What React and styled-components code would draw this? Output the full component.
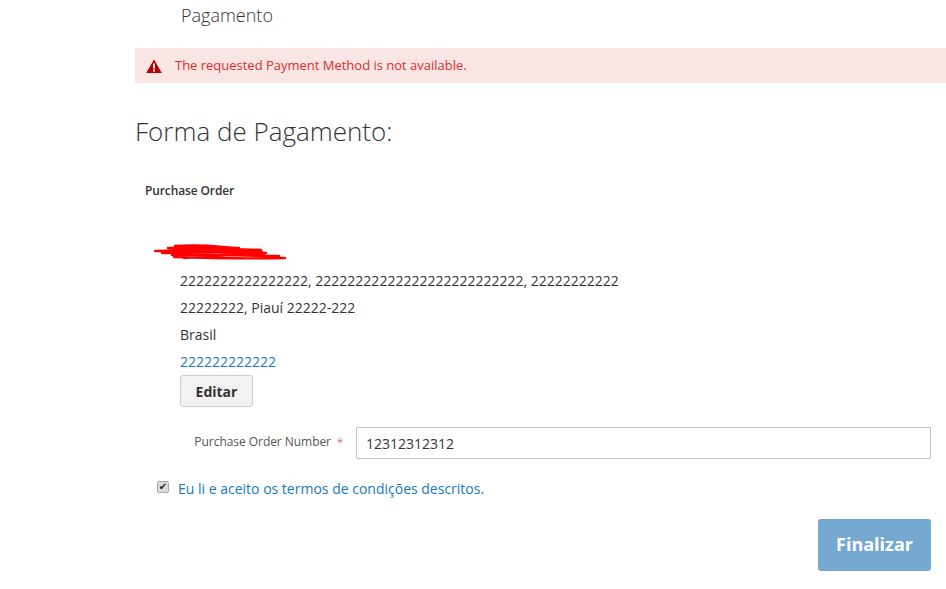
import styled, { createGlobalStyle } from 'styled-components';

const GlobalStyle = createGlobalStyle`
  html, body {
    margin: 0;
    padding: 0;
    background: #fff;
  }

  body {
    font-family: "Open Sans", "Liberation Sans", sans-serif;
    font-size: 14px;
    color: #333;
  }
`;

const Page = styled.div`
  width: 946px;
  height: 589px;
  padding-left: 135px;
  box-sizing: border-box;
  overflow: hidden;
`;

const StepTitle = styled.div`
  height: 48px;
  padding: 3px 0 0 46px;
  box-sizing: border-box;
  font-size: 18px;
  font-weight: 300;
  line-height: 24px;
  color: #333;
`;

const Message = styled.div`
  display: flex;
  align-items: center;
  gap: 12px;
  height: 35px;
  padding-left: 11px;
  background: #fae5e5;
  color: #e02b27;
  font-size: 13px;

  span {
    margin: 0 0 2px 1px;
    letter-spacing: -0.01px;
  }
`;

const Title = styled.h2`
  margin: 30px 0 0;
  font-size: 26px;
  font-weight: 300;
  line-height: 36px;
  color: #333;
`;

const MethodName = styled.div`
  margin: 33px 0 0 10px;
  font-size: 12px;
  font-weight: 600;
  line-height: 18px;
  letter-spacing: -0.12px;
`;

const Scribble = styled.svg`
  display: block;
  margin: 44px 0 0 19px;
`;

const Address = styled.div`
  margin: 6px 0 0 45px;
  line-height: 27px;
`;

const PhoneLink = styled.a`
  display: block;
  color: #1979c3;
  text-decoration: none;
`;

const EditButton = styled.button`
  display: block;
  width: 73px;
  height: 32px;
  padding: 0;
  border: 1px solid #cdcdcd;
  border-radius: 3px;
  background: #f2f2f2;
  color: #333;
  font-family: inherit;
  font-size: 14px;
  font-weight: 700;
`;

const Field = styled.div`
  display: flex;
  align-items: center;
  margin-top: 20px;
  width: 796px;
`;

const FieldLabel = styled.label`
  width: 221px;
  padding-right: 13px;
  box-sizing: border-box;
  text-align: right;
  font-size: 12px;
  letter-spacing: -0.05px;
  color: #555;
  margin-bottom: 4px;

  span {
    margin-left: 6px;
    color: #e4605c;
    font-size: 11px;
  }
`;

const TextInput = styled.input`
  width: 575px;
  height: 32px;
  padding: 0 9px;
  box-sizing: border-box;
  border: 1px solid #c2c2c2;
  border-radius: 1px;
  font-family: inherit;
  font-size: 14px;
  color: #333;
  outline: none;
`;

const Agreement = styled.div`
  display: flex;
  align-items: center;
  gap: 9px;
  margin: 20px 0 0 22px;
  height: 20px;
`;

const CheckBox = styled.input`
  appearance: none;
  display: flex;
  align-items: center;
  justify-content: center;
  width: 12px;
  height: 12px;
  margin: 0 0 4px;
  box-sizing: border-box;
  border: 1px solid #a9a9a9;
  border-radius: 2px;
  background: #dcdcdc;

  &:checked::after {
    content: "✔";
    font-family: "DejaVu Sans", sans-serif;
    font-size: 10px;
    line-height: 10px;
    color: #222;
  }
`;

const AgreementLink = styled.a`
  margin-bottom: 2px;
  color: #1979c3;
  text-decoration: none;
  font-size: 14px;
`;

const Actions = styled.div`
  display: flex;
  justify-content: flex-end;
  width: 796px;
  margin-top: 20px;
`;

const PlaceOrder = styled.button`
  width: 113px;
  height: 52px;
  padding: 0 0 2px;
  border: none;
  border-radius: 3px;
  background: #75a9cf;
  color: #fff;
  font-family: inherit;
  font-size: 18px;
  font-weight: 700;
`;

const WarningIcon = () => (
  <svg width="16" height="14" viewBox="0 0 16 14">
    <path d="M8 0.5 L15.8 14 H0.2 Z" fill="#b30000" />
    <rect x="7" y="4.5" width="2" height="5" fill="#fae5e5" />
    <rect x="7" y="10.5" width="2" height="2" fill="#fae5e5" />
  </svg>
);

const App = () => {
  return (
    <>
      <GlobalStyle />
      <Page>
        <StepTitle>Pagamento</StepTitle>
        <Message>
          <WarningIcon />
          <span>The requested Payment Method is not available.</span>
        </Message>
        <Title>Forma de Pagamento:</Title>
        <MethodName>Purchase Order</MethodName>
        <Scribble width="132" height="17" viewBox="0 0 132 17">
          <path
            d="M21 2 C50 0 65 3 85 4 M14 4 C45 3 70 5 107 6 M1 7 C30 6 70 6 108 8 M8 9 C40 8 80 8 112 9 M18 11 C50 10 90 12 125 12 M20 13 C50 14 90 15 131 14 M26 6 C60 8 95 10 120 13 M30 14 C60 12 80 10 110 11"
            fill="none"
            stroke="#f00"
            strokeWidth="2.4"
            strokeLinecap="round"
          />
        </Scribble>
        <Address>
          <div>2222222222222222, 22222222222222222222222222, 22222222222</div>
          <div>22222222, Piauí 22222-222</div>
          <div>Brasil</div>
          <PhoneLink href="#">222222222222</PhoneLink>
          <EditButton type="button">Editar</EditButton>
        </Address>
        <Field>
          <FieldLabel>
            Purchase Order Number<span>*</span>
          </FieldLabel>
          <TextInput defaultValue="12312312312" />
        </Field>
        <Agreement>
          <CheckBox type="checkbox" defaultChecked />
          <AgreementLink href="#">Eu li e aceito os termos de condições descritos.</AgreementLink>
        </Agreement>
        <Actions>
          <PlaceOrder type="button">Finalizar</PlaceOrder>
        </Actions>
      </Page>
    </>
  );
};

export default App;
